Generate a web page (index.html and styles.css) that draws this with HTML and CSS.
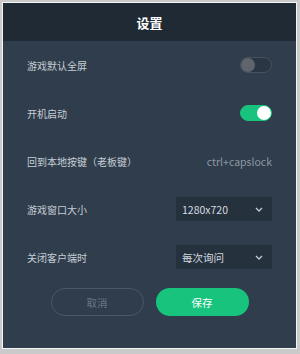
FILE: index.html
```html
<!DOCTYPE html>
<html lang="zh-CN">
<head>
	<meta charset="UTF-8">
	<title>设置</title>
	<link rel="stylesheet" href="styles.css">
</head>
<body>
<div class="window">
	<div class="head">设置</div>
	<div class="body">
		<div class="row">
			<span class="label">游戏默认全屏</span>
			<span class="switch"></span>
		</div>
		<div class="row">
			<span class="label">开机启动</span>
			<span class="switch on"></span>
		</div>
		<div class="row">
			<span class="label">回到本地按键（老板键）</span>
			<span class="key">ctrl+capslock</span>
		</div>
		<div class="row">
			<span class="label">游戏窗口大小</span>
			<div class="select">
				<span>1280x720</span>
				<svg width="8" height="5" viewBox="0 0 8 5"><path d="M1 1l3 3 3-3" fill="none" stroke="#c3cad2" stroke-width="1.3"/></svg>
			</div>
		</div>
		<div class="row">
			<span class="label">关闭客户端时</span>
			<div class="select">
				<span>每次询问</span>
				<svg width="8" height="5" viewBox="0 0 8 5"><path d="M1 1l3 3 3-3" fill="none" stroke="#c3cad2" stroke-width="1.3"/></svg>
			</div>
		</div>
		<div class="btns">
			<button class="btn cancel">取消</button>
			<button class="btn save">保存</button>
		</div>
	</div>
</div>
</body>
</html>
```

FILE: styles.css
```css
html{
	background: #cacaca;
}
body{
	margin: 0;
	padding: 2px 3px 3px 2px;
	font-family: "Noto Sans CJK SC", sans-serif;
	font-size: 10px;
}
.window{
	border: 1px solid #f4f4f4;
	height: 347px;
	background: #2f3d4c;
	box-sizing: border-box;
	display: flex;
	flex-direction: column;
}
.head{
	height: 38px;
	background: #1f2a34;
	color: #fff;
	font-size: 13px;
	font-weight: bold;
	display: flex;
	align-items: center;
	justify-content: center;
}
.body{
	padding: 0 24px;
}
.row{
	height: 48px;
	display: flex;
	align-items: center;
	justify-content: space-between;
}
.label{
	color: #c7ced6;
}
.key{
	color: #8d98a4;
	font-size: 10.5px;
}
.switch{
	width: 32px;
	height: 16px;
	border-radius: 8px;
	border: 1px solid #46525f;
	background: #2a3643;
	box-sizing: border-box;
	position: relative;
}
.switch::after{
	content: "";
	position: absolute;
	left: 0;
	top: 0;
	width: 14px;
	height: 14px;
	border-radius: 50%;
	background: #5e656d;
}
.switch.on{
	background: #18c47d;
	border-color: #18c47d;
}
.switch.on::after{
	left: auto;
	right: 0;
	background: #fff;
}
.select{
	width: 96px;
	height: 24px;
	background: #25313d;
	color: #d4dae0;
	font-size: 10.5px;
	padding: 0 9px 0 6px;
	box-sizing: border-box;
	display: flex;
	align-items: center;
	justify-content: space-between;
}
.btns{
	margin-top: 7px;
	display: flex;
	justify-content: center;
	gap: 12px;
}
.btn{
	width: 93px;
	height: 28px;
	border-radius: 14px;
	font-family: inherit;
	font-size: 10.5px;
	outline: none;
}
.cancel{
	background: transparent;
	border: 1px solid #4a5767;
	color: #6b7683;
}
.save{
	background: #18c47d;
	border: none;
	color: #fff;
}
```
